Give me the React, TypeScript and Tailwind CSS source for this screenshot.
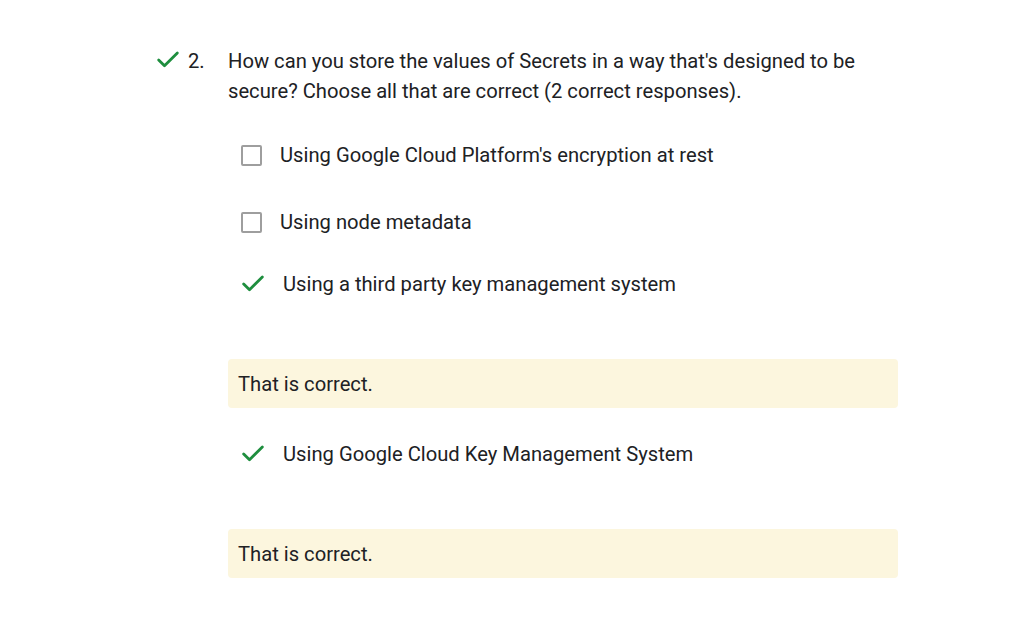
import { Check } from "lucide-react";

const GREEN = "text-[#1e8e3e]";

function Box() {
  return <span className="block h-[21px] w-[21px] shrink-0 rounded-[2px] border-2 border-[#9e9e9e]" />;
}

function Tick() {
  return <Check className={`-mx-[1px] h-[28px] w-[28px] shrink-0 ${GREEN}`} strokeWidth={2.4} />;
}

function Feedback() {
  return (
    <div className="flex h-[49px] items-center rounded-[4px] bg-[#fcf6de] px-[10px] pt-[1px] text-[20.2px] text-[#202124]">
      That is correct.
    </div>
  );
}

export default function App() {
  return (
    <div className="h-[618px] w-full bg-white font-['Roboto',sans-serif] text-[#202124]">
      <div className="flex pl-[155px] pt-[46px]">
        <Tick />
        <span className="ml-[7px] w-[40px] text-[20.2px] leading-[30px]">2.</span>
        <p className="w-[650px] text-[20.2px] leading-[30px]">
          How can you store the values of Secrets in a way that's designed to be secure? Choose all that are correct (2
          correct responses).
        </p>
      </div>

      <div className="ml-[228px] w-[670px] text-[20.2px]">
        <div className="mt-[36px] flex h-[26px] items-center pl-[13px]">
          <Box />
          <span className="ml-[18px]">Using Google Cloud Platform's encryption at rest</span>
        </div>
        <div className="mt-[41px] flex h-[26px] items-center pl-[13px]">
          <Box />
          <span className="ml-[18px]">Using node metadata</span>
        </div>
        <div className="mt-[36px] flex h-[26px] items-center pl-[12px]">
          <Tick />
          <span className="ml-[17px]">Using a third party key management system</span>
        </div>
        <div className="mt-[62px]">
          <Feedback />
        </div>
        <div className="mt-[33px] flex h-[26px] items-center pl-[12px]">
          <Tick />
          <span className="ml-[17px]">Using Google Cloud Key Management System</span>
        </div>
        <div className="mt-[62px]">
          <Feedback />
        </div>
      </div>
    </div>
  );
}
